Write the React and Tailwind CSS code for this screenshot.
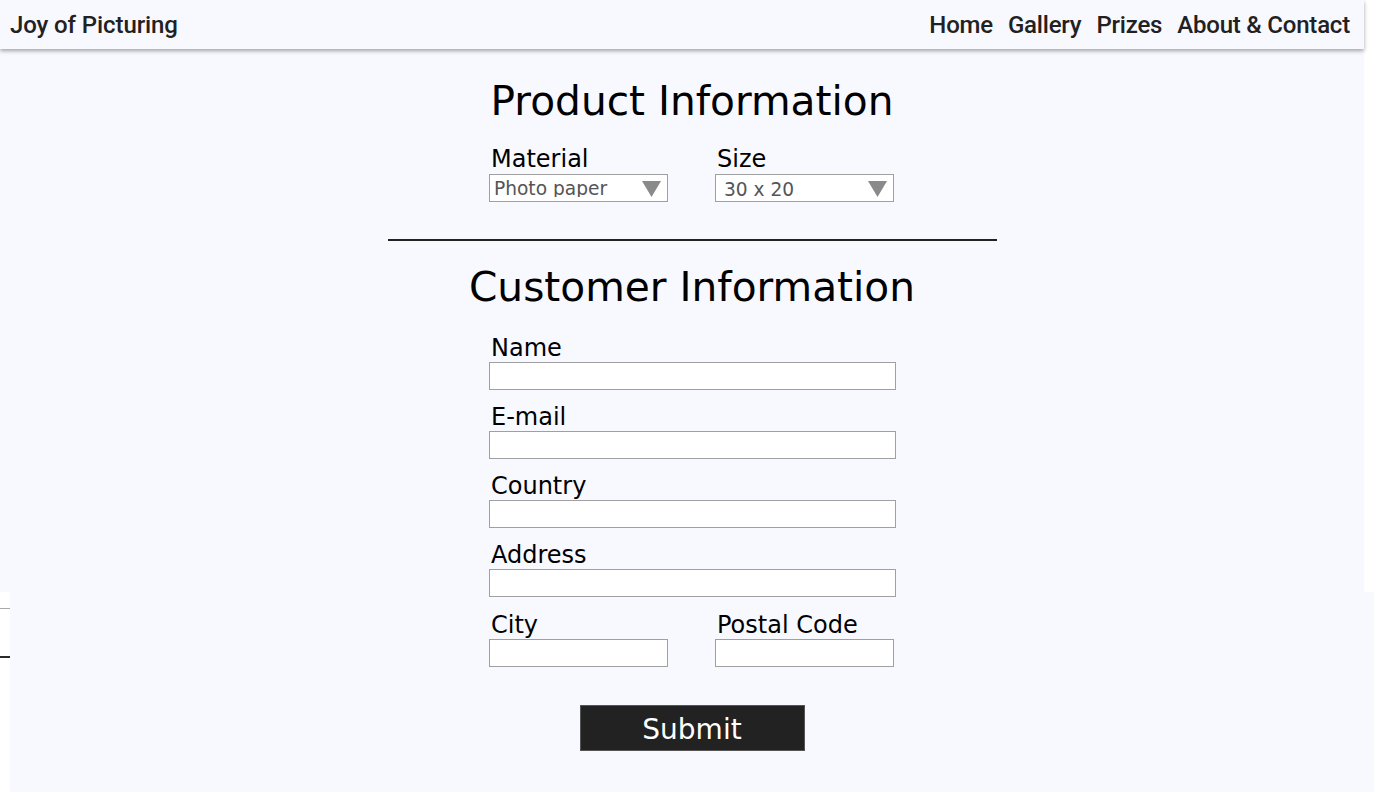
import React from 'react';

const navLinks = ['Home', 'Gallery', 'Prizes', 'About & Contact'];

const fields = ['Name', 'E-mail', 'Country', 'Address'];

const Label = ({ children }) => (
  <label className="block pl-[2px] text-[24px] leading-[28px] text-black">{children}</label>
);

const TextInput = ({ className = '' }) => (
  <input
    type="text"
    className={`block h-[28px] border border-[#a0a0a0] bg-white outline-none ${className}`}
  />
);

const Select = ({ value, options, textClass = '' }) => (
  <div className="relative h-[28px] w-[179px] border border-[#a0a0a0] bg-white">
    <select
      defaultValue={value}
      className={`h-full w-full appearance-none bg-transparent pl-[4px] text-[18.6px] text-[#555] outline-none ${textClass}`}
    >
      {options.map((o) => (
        <option key={o}>{o}</option>
      ))}
    </select>
    {/* arrow sits over the select */}
    <svg className="pointer-events-none absolute right-[6px] top-[6px]" width="19" height="16" viewBox="0 0 19 16">
      <polygon points="0,0 19,0 9.5,16" fill="#8a8a8a" />
    </svg>
  </div>
);

const App = () => {
  return (
    <div className="relative min-h-screen w-full bg-white" style={{ fontFamily: '"DejaVu Sans", Verdana, sans-serif' }}>
      {/* page backgrounds */}
      <div className="absolute left-0 top-0 h-[592px] w-[1364px] bg-[#f8f8ff]" />
      <div className="absolute bottom-0 left-[10px] right-0 top-[592px] bg-[#f8f8ff]" />
      <div className="absolute left-0 top-[608px] h-px w-[10px] bg-[#a8a8a8]" />
      <div className="absolute left-0 top-[656px] h-[2px] w-[10px] bg-[#2a2a2a]" />

      <div className="relative w-[1364px]">
        {/* Header */}
        <header
          className="flex h-[49px] items-center justify-between bg-[#f8f8ff] pl-[10px] pr-[14px] shadow-[0_2px_4px_rgba(0,0,0,0.35)]"
          style={{ fontFamily: 'Roboto, "Liberation Sans", sans-serif' }}
        >
          <span className="text-[24px] font-medium tracking-[-0.1px] text-[#212121]">Joy of Picturing</span>
          <nav className="flex gap-[15px]">
            {navLinks.map((link) => (
              <a key={link} href="#" className="text-[24px] font-medium tracking-[-0.2px] text-[#212121]">
                {link}
              </a>
            ))}
          </nav>
        </header>

        <main className="flex justify-center pb-[42px] pl-[20px]">
          <div className="flex w-[609px] flex-col items-center">
            <h1 className="mt-[29px] text-[40.7px] leading-[47px] text-black">Product Information</h1>

            <div className="mt-[20px] flex w-[406px] gap-[47px]">
              <div>
                <Label>Material</Label>
                <div className="mt-px">
                  <Select value="Photo paper" options={['Photo paper', 'Canvas', 'Poster']} textClass="pb-[4px]" />
                </div>
              </div>
              <div>
                <Label>Size</Label>
                <div className="mt-px">
                  <Select value="30 x 20" options={['30 x 20', '40 x 30', '60 x 40']} textClass="pl-[8px] pt-[1px]" />
                </div>
              </div>
            </div>

            <hr className="mt-[37px] h-[2px] w-[609px] border-0 bg-[#222]" />

            <h1 className="mt-[23px] text-[40.7px] leading-[47px] text-black">Customer Information</h1>

            <form className="mt-[23px] flex w-[406px] flex-col" onSubmit={(e) => e.preventDefault()}>
              {fields.map((f, i) => (
                <div key={f} className={i === 0 ? '' : 'mt-[13px]'}>
                  <Label>{f}</Label>
                  <TextInput className="w-[407px]" />
                </div>
              ))}

              <div className="mt-[14px] flex gap-[47px]">
                <div>
                  <Label>City</Label>
                  <TextInput className="w-[179px]" />
                </div>
                <div>
                  <Label>Postal Code</Label>
                  <TextInput className="w-[179px]" />
                </div>
              </div>

              <div className="mt-[38px] flex justify-center">
                <button
                  type="submit"
                  className="h-[46px] w-[225px] border border-[#555] bg-[#222] pt-[3px] text-[28px] text-white"
                >
                  Submit
                </button>
              </div>
            </form>
          </div>
        </main>
      </div>
    </div>
  );
};

export default App;
